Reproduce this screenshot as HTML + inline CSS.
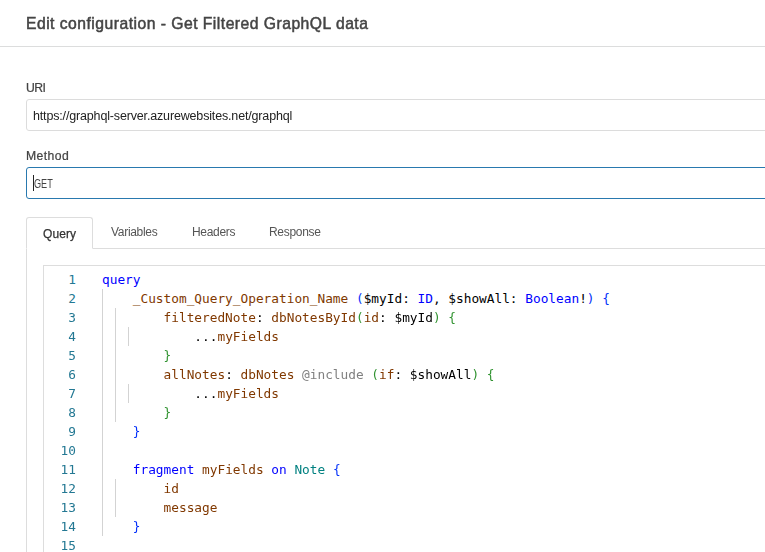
<!DOCTYPE html>
<html lang="en">
<head>
<meta charset="utf-8">
<title>Edit configuration - Get Filtered GraphQL data</title>
<style>
*{box-sizing:border-box;}
html,body{margin:0;padding:0;background:#fff;}
body{width:765px;height:552px;overflow:hidden;position:relative;font-family:"Liberation Sans",sans-serif;color:#333;}
.abs{position:absolute;white-space:nowrap;}
.gs{will-change:transform;}
#title{left:26px;top:14px;font-size:15.7px;font-weight:normal;-webkit-text-stroke:0.5px #444;color:#444;line-height:20px;letter-spacing:0.48px;}
#hr{left:0;top:46px;width:765px;height:1px;background:#dcdddd;}
.label{font-size:12.2px;font-weight:normal;-webkit-text-stroke:0.22px #444;color:#444;line-height:16px;left:26px;}
.input{left:26px;width:760px;height:32px;border:1px solid #dcdcdc;border-radius:3px;background:transparent;will-change:transform;font-size:12.5px;line-height:32px;padding-left:6px;color:#222;letter-spacing:-0.16px;}
#method{border-color:#2979af;color:#444;letter-spacing:0;}
#get{display:inline-block;transform:scaleX(0.73);transform-origin:0 50%;margin-left:1px;}
#l1{letter-spacing:-0.6px}#l2{letter-spacing:0.42px}
.tab{font-size:12px;line-height:16px;color:#555;letter-spacing:-0.3px;}
#t1{letter-spacing:0.1px;color:#333;-webkit-text-stroke:0.25px #333;}
#tabline{left:26px;top:248px;width:760px;height:1px;background:#ddd;}
#tabactive{left:26px;top:217px;width:67px;height:32px;border:1px solid #ddd;border-bottom:1px solid #fff;border-radius:3px 3px 0 0;background:#fff;}
#tableft{left:26px;top:249px;width:1px;height:320px;background:#ddd;}
#editor{left:43px;top:265px;width:760px;height:320px;border:1px solid #ddd;background:#fff;}
.ln,.code{font-family:"DejaVu Sans Mono","Liberation Mono",monospace;font-size:12.79px;line-height:19px;height:19px;}
.ln{left:43px;width:33px;text-align:right;color:#237893;}
.code{left:102px;color:#000;white-space:pre;}
.k{color:#0000ff}.i{color:#803800}.t{color:#008080}.a{color:#808080}
.b1{color:#0431fa}.b2{color:#319331}
.g{width:1px;background:#d3d3d3;}
</style>
</head>
<body>
<div class="abs gs" id="title">Edit configuration - Get Filtered GraphQL data</div>
<div class="abs" id="hr"></div>

<div class="abs label gs" id="l1" style="top:80px">URI</div>
<div class="abs input" id="uri" style="top:99px">https://graphql-server.azurewebsites.net/graphql</div>
<div class="abs label gs" id="l2" style="top:148px">Method</div>
<div class="abs input" id="method" style="top:167px"><span id="get">GET</span></div>
<div class="abs" id="caret" style="left:33px;top:175px;width:1px;height:16px;background:#222"></div>

<div class="abs" id="tabline"></div>
<div class="abs" id="tabactive"></div>
<div class="abs tab gs" id="t1" style="left:43px;top:226px;">Query</div>
<div class="abs tab gs" id="t2" style="left:111px;top:224px;">Variables</div>
<div class="abs tab gs" id="t3" style="left:192px;top:224px;">Headers</div>
<div class="abs tab gs" id="t4" style="left:269px;top:224px;">Response</div>
<div class="abs" id="tableft"></div>

<div class="abs" id="editor"></div>
<div id="lines">
<div class="abs ln" style="top:270px">1</div><div class="abs code" style="top:270px"><span class="k">query</span></div>
<div class="abs ln" style="top:289px">2</div><div class="abs code" style="top:289px">    <span class="i">_Custom_Query_Operation_Name</span> <span class="b1">(</span>$myId: <span class="k">ID</span>, $showAll: <span class="k">Boolean</span>!<span class="b1">)</span> <span class="b1">{</span></div>
<div class="abs ln" style="top:308px">3</div><div class="abs code" style="top:308px">        <span class="i">filteredNote</span>: <span class="i">dbNotesById</span><span class="b2">(</span><span class="i">id</span>: $myId<span class="b2">)</span> <span class="b2">{</span></div>
<div class="abs ln" style="top:327px">4</div><div class="abs code" style="top:327px">            ...<span class="i">myFields</span></div>
<div class="abs ln" style="top:346px">5</div><div class="abs code" style="top:346px">        <span class="b2">}</span></div>
<div class="abs ln" style="top:365px">6</div><div class="abs code" style="top:365px">        <span class="i">allNotes</span>: <span class="i">dbNotes</span> <span class="a">@include</span> <span class="b2">(</span><span class="i">if</span>: $showAll<span class="b2">)</span> <span class="b2">{</span></div>
<div class="abs ln" style="top:384px">7</div><div class="abs code" style="top:384px">            ...<span class="i">myFields</span></div>
<div class="abs ln" style="top:403px">8</div><div class="abs code" style="top:403px">        <span class="b2">}</span></div>
<div class="abs ln" style="top:422px">9</div><div class="abs code" style="top:422px">    <span class="b1">}</span></div>
<div class="abs ln" style="top:441px">10</div><div class="abs code" style="top:441px"></div>
<div class="abs ln" style="top:460px">11</div><div class="abs code" style="top:460px">    <span class="k">fragment</span> <span class="i">myFields</span> <span class="k">on</span> <span class="t">Note</span> <span class="b1">{</span></div>
<div class="abs ln" style="top:479px">12</div><div class="abs code" style="top:479px">        <span class="i">id</span></div>
<div class="abs ln" style="top:498px">13</div><div class="abs code" style="top:498px">        <span class="i">message</span></div>
<div class="abs ln" style="top:517px">14</div><div class="abs code" style="top:517px">    <span class="b1">}</span></div>
<div class="abs ln" style="top:536px">15</div><div class="abs code" style="top:536px"></div>
</div>
<div class="abs g" style="left:102px;top:289px;height:247px"></div>
<div class="abs g" style="left:115px;top:308px;height:114px"></div>
<div class="abs g" style="left:128px;top:327px;height:19px"></div>
<div class="abs g" style="left:128px;top:384px;height:19px"></div>
<div class="abs g" style="left:115px;top:479px;height:38px"></div>
</body>
</html>
